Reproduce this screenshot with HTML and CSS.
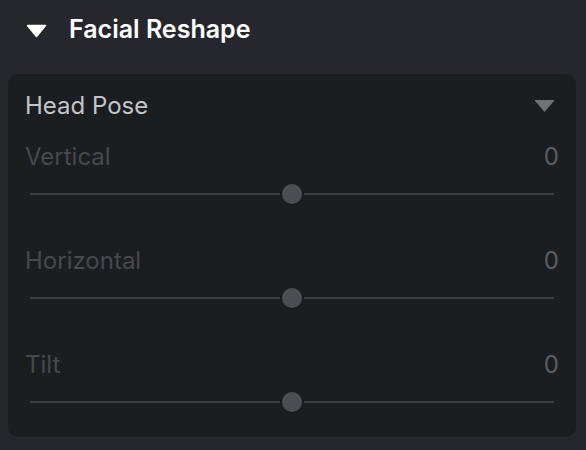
FILE: index.html
```html
<!DOCTYPE html>
<html lang="en">
<head>
    <meta charset="UTF-8">
    <meta name="viewport" content="width=device-width, initial-scale=1.0">
    <title>Facial Reshape</title>
    <link rel="stylesheet" href="styles.css">
</head>
<body>
    <div class="section">
        <div class="section-header">
            <svg class="caret" width="21" height="14" viewBox="0 0 21 14">
                <path d="M1.5 1.5 L19.5 1.5 L10.5 12.5 Z" fill="#fff" stroke="#fff" stroke-width="1.5" stroke-linejoin="round"/>
            </svg>
            <span class="section-title">Facial Reshape</span>
        </div>

        <div class="panel">
            <div class="panel-head">
                <span class="panel-title">Head Pose</span>
                <svg class="dropdown" width="21" height="14" viewBox="0 0 21 14">
                    <path d="M1.5 1.5 L19.5 1.5 L10.5 12 Z" fill="#6f7276" stroke="#6f7276" stroke-width="1.2" stroke-linejoin="round"/>
                </svg>
            </div>

            <div class="control">
                <div class="control-row">
                    <span class="control-label">Vertical</span>
                    <span class="control-value">0</span>
                </div>
                <div class="slider">
                    <div class="track"></div>
                    <div class="thumb"></div>
                </div>
            </div>

            <div class="control">
                <div class="control-row">
                    <span class="control-label">Horizontal</span>
                    <span class="control-value">0</span>
                </div>
                <div class="slider">
                    <div class="track"></div>
                    <div class="thumb"></div>
                </div>
            </div>

            <div class="control">
                <div class="control-row">
                    <span class="control-label">Tilt</span>
                    <span class="control-value">0</span>
                </div>
                <div class="slider">
                    <div class="track"></div>
                    <div class="thumb"></div>
                </div>
            </div>
        </div>
    </div>
</body>
</html>
```

FILE: styles.css
```css
body {
    margin: 0;
    padding: 0;
    background-color: #25272c;
    font-family: Inter, "Noto Sans", sans-serif;
    width: 586px;
    height: 450px;
    overflow: hidden;
}

.section-header {
    display: flex;
    align-items: center;
    height: 58px;
    padding-left: 26px;
    padding-bottom: 16px;
}

.caret {
    margin-top: 4px;
    margin-right: 22px;
}

.section-title {
    color: #ffffff;
    font-size: 25px;
    font-weight: 600;
    line-height: 58px;
}

.panel {
    margin: 0 10px 0 8px;
    padding: 14px 17px 15px 17px;
    background-color: #1b1e21;
    border-radius: 10px;
}

.panel-head {
    display: flex;
    justify-content: space-between;
    align-items: center;
    height: 36px;
    margin-bottom: 16px;
}

.panel-title {
    color: #c3c5c8;
    font-size: 24px;
    line-height: 36px;
}

.dropdown {
    margin-right: 4px;
}

.control {
    margin-bottom: 30px;
}

.control:last-child {
    margin-bottom: 0;
}

.control-row {
    display: flex;
    justify-content: space-between;
    height: 34px;
    line-height: 34px;
    font-size: 24px;
}

.control-label {
    color: #46494d;
}

.control-value {
    color: #5b5e62;
}

.slider {
    position: relative;
    height: 40px;
    margin: 0 5px;
}

.track {
    position: absolute;
    left: 0;
    right: 0;
    top: 19px;
    height: 2px;
    background-color: #3a3d41;
}

.thumb {
    position: absolute;
    left: 50%;
    top: 10px;
    width: 20px;
    height: 20px;
    margin-left: -10px;
    border-radius: 50%;
    background-color: #4b4e52;
    box-shadow: 0 0 0 2px #1b1e21;
}
```
